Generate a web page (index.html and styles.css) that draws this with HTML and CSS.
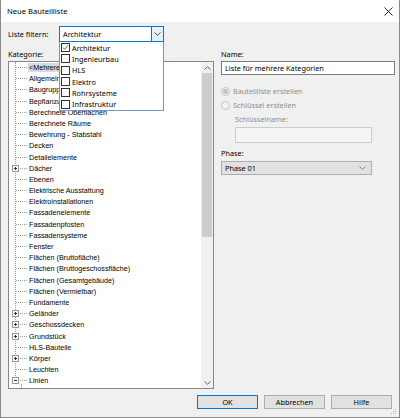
FILE: index.html
```html
<!DOCTYPE html>
<html lang="de">
<head>
<meta charset="utf-8">
<title>Neue Bauteilliste</title>
<link rel="stylesheet" href="styles.css">
</head>
<body>
<div class="window">
  <div class="titlebar">
    <span class="title">Neue Bauteilliste</span>
    <svg class="close" width="9" height="9" viewBox="0 0 9 9"><path d="M0.5 0.5 L8.5 8.5 M8.5 0.5 L0.5 8.5" stroke="#111" stroke-width="0.9" fill="none"/></svg>
  </div>
  <div class="content">
    <div class="filter-row">
      <span class="lbl filter-lbl">Liste filtern:</span>
      <div class="combo">
        <span class="combo-text">Architektur</span>
        <span class="combo-btn"><svg width="7" height="4" viewBox="0 0 7 4"><path d="M0.5 0.5 L3.5 3.3 L6.5 0.5" stroke="#444" stroke-width="0.9" fill="none"/></svg></span>
      </div>
    </div>
    <div class="main">
      <div class="left">
        <div class="lbl cap">Kategorie:</div>
        <div class="tree">
          <div class="tree-items">
            <div class="row"><span class="txt sel">&lt;Mehrere Kategorien&gt;</span></div>
            <div class="row"><span class="txt">Allgemeines Modell</span></div>
            <div class="row"><span class="txt">Baugruppen</span></div>
            <div class="row"><span class="txt">Bepflanzung</span></div>
            <div class="row"><span class="txt">Berechnete Oberflächen</span></div>
            <div class="row"><span class="txt">Berechnete Räume</span></div>
            <div class="row"><span class="txt">Bewehrung - Stabstahl</span></div>
            <div class="row"><span class="txt">Decken</span></div>
            <div class="row"><span class="txt">Detailelemente</span></div>
            <div class="row"><svg class="exp" width="7" height="7" viewBox="0 0 7 7"><rect x="0.5" y="0.5" width="6" height="6" fill="#fff" stroke="#9a9a9a"/><path d="M2 3.5 H5 M3.5 2 V5" stroke="#333" stroke-width="1"/></svg><span class="txt">Dächer</span></div>
            <div class="row"><span class="txt">Ebenen</span></div>
            <div class="row"><span class="txt">Elektrische Ausstattung</span></div>
            <div class="row"><span class="txt">Elektroinstallationen</span></div>
            <div class="row"><span class="txt">Fassadenelemente</span></div>
            <div class="row"><span class="txt">Fassadenpfosten</span></div>
            <div class="row"><span class="txt">Fassadensysteme</span></div>
            <div class="row"><span class="txt">Fenster</span></div>
            <div class="row"><span class="txt">Flächen (Bruttofläche)</span></div>
            <div class="row"><span class="txt">Flächen (Bruttogeschossfläche)</span></div>
            <div class="row"><span class="txt">Flächen (Gesamtgebäude)</span></div>
            <div class="row"><span class="txt">Flächen (Vermietbar)</span></div>
            <div class="row"><span class="txt">Fundamente</span></div>
            <div class="row"><svg class="exp" width="7" height="7" viewBox="0 0 7 7"><rect x="0.5" y="0.5" width="6" height="6" fill="#fff" stroke="#9a9a9a"/><path d="M2 3.5 H5 M3.5 2 V5" stroke="#333" stroke-width="1"/></svg><span class="txt">Geländer</span></div>
            <div class="row"><svg class="exp" width="7" height="7" viewBox="0 0 7 7"><rect x="0.5" y="0.5" width="6" height="6" fill="#fff" stroke="#9a9a9a"/><path d="M2 3.5 H5 M3.5 2 V5" stroke="#333" stroke-width="1"/></svg><span class="txt">Geschossdecken</span></div>
            <div class="row"><svg class="exp" width="7" height="7" viewBox="0 0 7 7"><rect x="0.5" y="0.5" width="6" height="6" fill="#fff" stroke="#9a9a9a"/><path d="M2 3.5 H5 M3.5 2 V5" stroke="#333" stroke-width="1"/></svg><span class="txt">Grundstück</span></div>
            <div class="row"><span class="txt">HLS-Bauteile</span></div>
            <div class="row"><svg class="exp" width="7" height="7" viewBox="0 0 7 7"><rect x="0.5" y="0.5" width="6" height="6" fill="#fff" stroke="#9a9a9a"/><path d="M2 3.5 H5 M3.5 2 V5" stroke="#333" stroke-width="1"/></svg><span class="txt">Körper</span></div>
            <div class="row"><span class="txt">Leuchten</span></div>
            <div class="row last"><svg class="exp" width="7" height="7" viewBox="0 0 7 7"><rect x="0.5" y="0.5" width="6" height="6" fill="#fff" stroke="#9a9a9a"/><path d="M2 3.5 H5" stroke="#333" stroke-width="1"/></svg><span class="txt">Linien</span></div>
          </div>
          <div class="vscroll">
            <div class="arrow"><svg width="7" height="4" viewBox="0 0 7 4"><path d="M0.5 3.5 L3.5 0.7 L6.5 3.5" stroke="#606060" stroke-width="1" fill="none"/></svg></div>
            <div class="track"><div class="thumb"></div></div>
            <div class="arrow"><svg width="7" height="4" viewBox="0 0 7 4"><path d="M0.5 0.5 L3.5 3.3 L6.5 0.5" stroke="#606060" stroke-width="1" fill="none"/></svg></div>
          </div>
        </div>
      </div>
      <div class="right">
        <div class="lbl cap">Name:</div>
        <div class="textbox">Liste für mehrere Kategorien</div>
        <div class="radio-row first"><span class="radio on"></span><span class="dis">Bauteilliste erstellen</span></div>
        <div class="radio-row"><span class="radio"></span><span class="dis">Schlüssel erstellen</span></div>
        <div class="lbl dis key-lbl">Schlüsselname:</div>
        <div class="textbox disabled"></div>
        <div class="lbl cap phase-lbl">Phase:</div>
        <div class="select">
          <span>Phase 01</span>
          <svg width="7" height="4" viewBox="0 0 7 4"><path d="M0.5 0.5 L3.5 3.3 L6.5 0.5" stroke="#777" stroke-width="0.9" fill="none"/></svg>
        </div>
      </div>
    </div>
    <div class="footer">
      <button class="btn default">OK</button>
      <button class="btn">Abbrechen</button>
      <button class="btn">Hilfe</button>
    </div>
  </div>
  <div class="dropdown">
    <div class="opt"><span class="cb"><svg width="9" height="9" viewBox="0 0 9 9"><path d="M1.3 4.6 L3.5 6.8 L7.8 1.6" stroke="#222" stroke-width="0.9" fill="none"/></svg></span>Architektur</div>
    <div class="opt"><span class="cb"></span>Ingenieurbau</div>
    <div class="opt"><span class="cb"></span>HLS</div>
    <div class="opt"><span class="cb"></span>Elektro</div>
    <div class="opt"><span class="cb"></span>Rohrsysteme</div>
    <div class="opt"><span class="cb"></span>Infrastruktur</div>
  </div>
  <svg class="grip" width="6" height="6" viewBox="0 0 6 6"><rect x="4" y="0" width="1" height="1" fill="#b0b0b0"/><rect x="2" y="2" width="1" height="1" fill="#b0b0b0"/><rect x="4" y="2" width="1" height="1" fill="#b0b0b0"/><rect x="0" y="4" width="1" height="1" fill="#b0b0b0"/><rect x="2" y="4" width="1" height="1" fill="#b0b0b0"/><rect x="4" y="4" width="1" height="1" fill="#b0b0b0"/></svg>
</div>
</body>
</html>
```
FILE: styles.css
```css
* { box-sizing: border-box; }
html, body { margin: 0; padding: 0; }
body {
  font-family: "Noto Sans", "Liberation Sans", sans-serif;
  font-size: 7.3px;
  color: #000;
  background: #fff;
}
.window {
  position: relative;
  width: 400px;
  height: 418px;
  display: flex;
  flex-direction: column;
  border-left: 1px solid #8a8a8a;
  border-right: 1px solid #8a8a8a;
  border-bottom: 1px solid #8a8a8a;
  background: #f0f0f0;
}
.titlebar {
  height: 22px;
  background: #fff;
  display: flex;
  align-items: center;
  justify-content: space-between;
  padding: 0 6px 0 6px;
  flex: none;
}
.title { font-size: 7.6px; }
.close { display: block; }
.content {
  flex: 1;
  display: flex;
  flex-direction: column;
}
.filter-row {
  margin-top: 4px;
  height: 16px;
  display: flex;
  align-items: center;
}
.filter-lbl {
  width: 58px;
  padding-left: 7px;
}
.combo {
  width: 105px;
  height: 16px;
  border: 1px solid #0078d7;
  background: #fff;
  display: flex;
  align-items: center;
}
.combo-text { flex: 1; padding-left: 3px; }
.combo-btn {
  width: 12px;
  height: 14px;
  border-left: 1px solid #0078d7;
  background: #e5f1fb;
  display: flex;
  align-items: center;
  justify-content: center;
}
.combo-btn svg { display: block; }
.main {
  margin-top: 5px;
  display: flex;
  padding-left: 7px;
}
.lbl { white-space: nowrap; }
.cap { height: 14px; line-height: 14px; }
.left { width: 206px; }
.tree {
  width: 206px;
  height: 328px;
  border: 1px solid #828790;
  background: #fff;
  display: flex;
}
.tree-items {
  flex: 1;
  position: relative;
  overflow: hidden;
  font-family: "Liberation Sans", sans-serif;
  font-size: 7.2px;
}
.tree-items::before {
  content: "";
  position: absolute;
  left: 6px;
  top: 0;
  height: 322px;
  border-left: 1px dotted #a0a0a0;
}
.row {
  position: relative;
  height: 11.2px;
  line-height: 11.2px;
  padding-left: 19px;
  white-space: nowrap;
}
.row::before {
  content: "";
  position: absolute;
  left: 7px;
  top: 5px;
  width: 11px;
  border-top: 1px dotted #a0a0a0;
}
.row.last::after {
  content: "";
  position: absolute;
  left: 12px;
  top: 9px;
  height: 8px;
  border-left: 1px dotted #a0a0a0;
}
.exp {
  position: absolute;
  left: 3px;
  top: 2px;
  z-index: 1;
  display: block;
}
.txt { padding: 0 1px; }
.txt.sel { background: #d9d9d9; }
.vscroll {
  width: 12px;
  background: #f0f0f0;
  display: flex;
  flex-direction: column;
}
.arrow {
  height: 11px;
  display: flex;
  align-items: center;
  justify-content: center;
}
.arrow svg { display: block; }
.track { flex: 1; padding: 0 1px; }
.thumb {
  margin-top: 0;
  height: 164px;
  background: #cdcdcd;
}
.right {
  margin-left: 7px;
  width: 174px;
}
.textbox {
  height: 14px;
  border: 1px solid #7a7a7a;
  background: #fff;
  line-height: 12px;
  padding-left: 3px;
  white-space: nowrap;
}
.textbox.disabled {
  margin-top: 1px;
  margin-left: 14px;
  width: 137px;
  height: 16px;
  border-color: #cccccc;
  background: #f5f5f5;
}
.radio-row {
  height: 14px;
  display: flex;
  align-items: center;
  gap: 3px;
}
.radio-row.first { margin-top: 9px; }
.radio {
  width: 9px;
  height: 9px;
  border-radius: 50%;
  border: 1px solid #c2c2c2;
  background: #f4f4f4;
  display: flex;
  align-items: center;
  justify-content: center;
}
.radio.on::after {
  content: "";
  width: 5px;
  height: 5px;
  border-radius: 50%;
  background: #c2c2c2;
}
.dis { color: #8d8d8d; }
.key-lbl {
  height: 14px;
  line-height: 14px;
  padding-left: 14px;
}
.phase-lbl { margin-top: 3px; }
.select {
  margin-top: 1px;
  width: 151px;
  height: 14px;
  border: 1px solid #adadad;
  background: #e1e1e1;
  display: flex;
  align-items: center;
  justify-content: space-between;
  padding: 0 5px 0 3px;
}
.select svg { display: block; }
.footer {
  margin-top: 6px;
  display: flex;
  justify-content: flex-end;
  gap: 6px;
  padding-right: 7px;
}
.btn {
  width: 61px;
  height: 14px;
  margin: 0;
  padding: 0;
  font-family: inherit;
  font-size: 7.3px;
  color: #000;
  background: #e1e1e1;
  border: 1px solid #adadad;
}
.btn.default { border-color: #0078d7; }
.dropdown {
  position: absolute;
  left: 58px;
  top: 42px;
  width: 105px;
  height: 69px;
  background: #fff;
  border: 1px solid #6b9ad2;
  border-top: none;
  z-index: 5;
}
.opt {
  height: 11.3px;
  display: flex;
  align-items: center;
  gap: 2px;
  padding-left: 1px;
  white-space: nowrap;
}
.cb {
  width: 9px;
  height: 9px;
  border: 1px solid #333;
  background: #fff;
  display: flex;
  align-items: center;
  justify-content: center;
  flex: none;
}
.cb svg { display: block; }
.grip {
  position: absolute;
  right: 2px;
  bottom: 2px;
}
```
